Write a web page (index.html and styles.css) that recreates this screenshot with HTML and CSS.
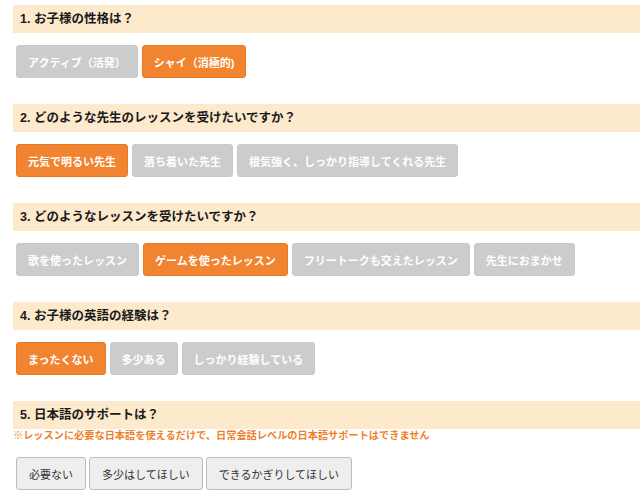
FILE: index.html
```html
<!DOCTYPE html>
<html lang="ja">
<head>
    <meta charset="UTF-8">
    <title>アンケート</title>
    <link rel="stylesheet" href="styles.css">
</head>
<body>
    <div class="survey">
        <div class="question">
            <h3 class="q-title">1. お子様の性格は？</h3>
            <div class="options">
                <button class="opt">アクティブ（活発）</button>
                <button class="opt selected">シャイ（消極的)</button>
            </div>
        </div>
        <div class="question">
            <h3 class="q-title">2. どのような先生のレッスンを受けたいですか？</h3>
            <div class="options">
                <button class="opt selected">元気で明るい先生</button>
                <button class="opt">落ち着いた先生</button>
                <button class="opt">根気強く、しっかり指導してくれる先生</button>
            </div>
        </div>
        <div class="question">
            <h3 class="q-title">3. どのようなレッスンを受けたいですか？</h3>
            <div class="options">
                <button class="opt">歌を使ったレッスン</button>
                <button class="opt selected">ゲームを使ったレッスン</button>
                <button class="opt">フリートークも交えたレッスン</button>
                <button class="opt">先生におまかせ</button>
            </div>
        </div>
        <div class="question">
            <h3 class="q-title">4. お子様の英語の経験は？</h3>
            <div class="options">
                <button class="opt selected">まったくない</button>
                <button class="opt">多少ある</button>
                <button class="opt">しっかり経験している</button>
            </div>
        </div>
        <div class="question">
            <h3 class="q-title">5. 日本語のサポートは？</h3>
            <p class="note">※レッスンに必要な日本語を使えるだけで、日常会話レベルの日本語サポートはできません</p>
            <div class="options plain-row">
                <button class="opt plain">必要ない</button>
                <button class="opt plain">多少はしてほしい</button>
                <button class="opt plain">できるかぎりしてほしい</button>
            </div>
        </div>
    </div>
</body>
</html>
```

FILE: styles.css
```css
body {
    margin: 0;
    font-family: 'Liberation Sans', 'Noto Sans CJK JP', sans-serif;
    background-color: #ffffff;
    color: #222;
}
.survey {
    padding: 5px 0 0 13px;
}
.question {
    margin-bottom: 26px;
}
.q-title {
    margin: 0;
    height: 28px;
    line-height: 28px;
    padding-left: 7px;
    font-size: 12.5px;
    font-weight: bold;
    background-color: #fde9cc;
    color: #1a1a1a;
}
.options {
    display: flex;
    gap: 4px;
    margin: 12px 0 0 3px;
}
.opt {
    height: 33px;
    padding: 0 11px;
    font-family: inherit;
    font-size: 11px;
    font-weight: bold;
    color: #fff;
    background-color: #cccccc;
    border: 1px solid #c8c8c8;
    border-radius: 3px;
    cursor: pointer;
}
.opt.selected {
    background-color: #f18430;
    border-color: #e97a22;
}
.plain-row {
    gap: 3px;
}
.opt.plain {
    padding: 0 12px;
    font-weight: normal;
    color: #333;
    background-color: #eeeeee;
    border-color: #bdbdbd;
}
.note {
    margin: 0;
    height: 14px;
    line-height: 14px;
    font-size: 10.2px;
    font-weight: bold;
    color: #f07f2a;
}
.note + .options {
    margin-top: 14px;
}
```
